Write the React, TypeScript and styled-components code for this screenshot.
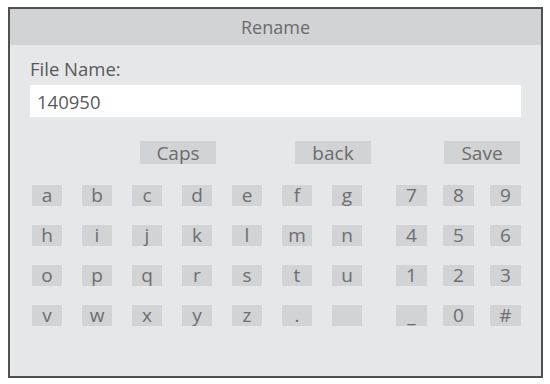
import React, { useState } from "react";
import styled, { createGlobalStyle } from "styled-components";

const GlobalStyle = createGlobalStyle`
  html, body {
    margin: 0;
    padding: 0;
    background: #ffffff;
  }
  body {
    padding: 7px 7px 0 8px;
    font-family: "Open Sans", "Liberation Sans", sans-serif;
  }
`;

const letterRows = [
  ["a", "b", "c", "d", "e", "f", "g"],
  ["h", "i", "j", "k", "l", "m", "n"],
  ["o", "p", "q", "r", "s", "t", "u"],
  ["v", "w", "x", "y", "z", ".", " "],
];

const numberRows = [
  ["7", "8", "9"],
  ["4", "5", "6"],
  ["1", "2", "3"],
  ["_", "0", "#"],
];

const App: React.FC = () => {
  const [fileName, setFileName] = useState("140950");

  return (
    <>
      <GlobalStyle />
      <Dialog>
        <TitleBar>Rename</TitleBar>
        <Body>
          <Label>File Name:</Label>
          <NameInput value={fileName} onChange={(e) => setFileName(e.target.value)} />
          <ActionRow>
            <ActionButton $offset={110}>Caps</ActionButton>
            <ActionButton $offset={79}>back</ActionButton>
            <ActionButton $offset={73}>Save</ActionButton>
          </ActionRow>
          <Keyboard>
            <LetterGrid>
              {letterRows.flat().map((k, i) => (
                <Key key={"l" + i}>{k}</Key>
              ))}
            </LetterGrid>
            <NumberGrid>
              {numberRows.flat().map((k, i) => (
                <Key key={"n" + i}>{k}</Key>
              ))}
            </NumberGrid>
          </Keyboard>
        </Body>
      </Dialog>
    </>
  );
};

export default App;

/* Dialog frame */
const Dialog = styled.div`
  width: 531px;
  height: 367px;
  border: 2px solid #4f5052;
  background: #e6e7e8;
  display: flex;
  flex-direction: column;
`;

/* Title */
const TitleBar = styled.div`
  height: 35px;
  background: #d1d3d4;
  display: flex;
  align-items: center;
  justify-content: center;
  font-size: 18px;
  color: #6a6b6e;
  padding-bottom: 1px;
`;

const Body = styled.div`
  padding: 12px 20px 0 20px;
  display: flex;
  flex-direction: column;
`;

const Label = styled.div`
  font-size: 18.5px;
  line-height: 24px;
  color: #58595b;
`;

const NameInput = styled.input`
  margin-top: 4px;
  width: 491px;
  height: 32px;
  box-sizing: border-box;
  border: none;
  outline: none;
  background: #ffffff;
  padding: 0 7px;
  font-family: "Open Sans", "Liberation Sans", sans-serif;
  font-size: 18.5px;
  color: #58595b;
`;

/* Caps / back / Save */
const ActionRow = styled.div`
  display: flex;
  margin-top: 24px;
`;

const ActionButton = styled.div<{ $offset: number }>`
  margin-left: ${(p) => p.$offset}px;
  width: 76px;
  height: 23px;
  background: #d1d3d4;
  display: flex;
  align-items: center;
  justify-content: center;
  font-size: 19px;
  color: #6a6b6e;
`;

/* Keys */
const Keyboard = styled.div`
  display: flex;
  margin-top: 21px;
  padding-left: 2px;
`;

const LetterGrid = styled.div`
  display: grid;
  grid-template-columns: repeat(7, 30px);
  grid-auto-rows: 21px;
  column-gap: 20px;
  row-gap: 19px;
`;

const NumberGrid = styled.div`
  margin-left: 34px;
  display: grid;
  grid-template-columns: repeat(3, 31px);
  grid-auto-rows: 21px;
  column-gap: 16px;
  row-gap: 19px;
`;

const Key = styled.div`
  background: #d1d3d4;
  display: flex;
  align-items: center;
  justify-content: center;
  font-size: 19px;
  line-height: 21px;
  color: #6d6e71;
  white-space: pre;
`;
